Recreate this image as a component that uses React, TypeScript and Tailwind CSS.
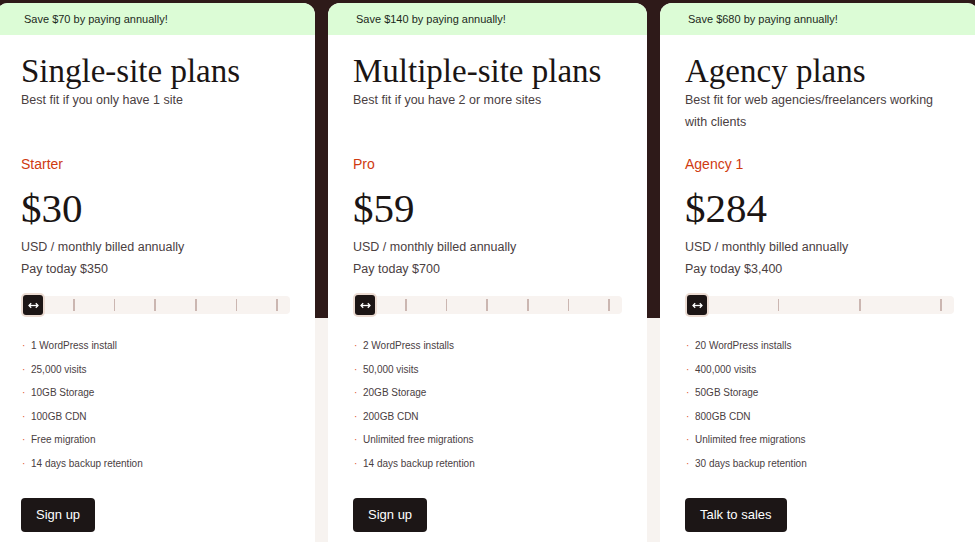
import React from "react";

type Plan = {
  save: string;
  title: string;
  subtitle: string;
  tier: string;
  price: string;
  payToday: string;
  steps: number;
  features: string[];
  cta: string;
};

const plans: Plan[] = [
  {
    save: "Save $70 by paying annually!",
    title: "Single-site plans",
    subtitle: "Best fit if you only have 1 site",
    tier: "Starter",
    price: "$30",
    payToday: "Pay today $350",
    steps: 6,
    features: [
      "1 WordPress install",
      "25,000 visits",
      "10GB Storage",
      "100GB CDN",
      "Free migration",
      "14 days backup retention",
    ],
    cta: "Sign up",
  },
  {
    save: "Save $140 by paying annually!",
    title: "Multiple-site plans",
    subtitle: "Best fit if you have 2 or more sites",
    tier: "Pro",
    price: "$59",
    payToday: "Pay today $700",
    steps: 6,
    features: [
      "2 WordPress installs",
      "50,000 visits",
      "20GB Storage",
      "200GB CDN",
      "Unlimited free migrations",
      "14 days backup retention",
    ],
    cta: "Sign up",
  },
  {
    save: "Save $680 by paying annually!",
    title: "Agency plans",
    subtitle: "Best fit for web agencies/freelancers working with clients",
    tier: "Agency 1",
    price: "$284",
    payToday: "Pay today $3,400",
    steps: 3,
    features: [
      "20 WordPress installs",
      "400,000 visits",
      "50GB Storage",
      "800GB CDN",
      "Unlimited free migrations",
      "30 days backup retention",
    ],
    cta: "Talk to sales",
  },
];

function Slider({ steps }: { steps: number }) {
  return (
    <div className="relative h-[24px]">
      <div className="absolute inset-x-0 top-[3px] h-[18px] rounded-[4px] bg-[#f8f3f0]">
        <div className="flex h-full items-center justify-between px-[12px]">
          <span className="w-px" />
          {Array.from({ length: steps }).map((_, i) => (
            <span key={i} className="h-[12px] w-[1.5px] bg-[#cbb6b1]" />
          ))}
        </div>
      </div>
      {/* handle */}
      <div className="absolute left-0 top-0 flex h-[24px] w-[24px] items-center justify-center rounded-[5px] bg-[#ecdcd3]">
        <div className="flex h-[20px] w-[20px] items-center justify-center rounded-[3px] bg-[#1c1515]">
          <svg width="11" height="7" viewBox="0 0 11 7" fill="none">
            <path d="M1 3.5h9" stroke="#fff" strokeWidth="1.3" />
            <path d="M3.2 1.2L1 3.5l2.2 2.3M7.8 1.2L10 3.5 7.8 5.8" stroke="#fff" strokeWidth="1.3" />
          </svg>
        </div>
      </div>
    </div>
  );
}

function PlanCard({ plan }: { plan: Plan }) {
  return (
    <div className="w-[319px] shrink-0 overflow-hidden rounded-t-[12px] bg-white">
      <div className="flex h-[32px] items-center bg-[#dcfcd6] pl-[28px] text-[11px] text-[#1d2a1c]">
        {plan.save}
      </div>
      <div className="px-[25px]">
        <h2 className="mt-[18px] font-['Liberation_Serif',serif] text-[33px] leading-[36px] font-normal text-[#1b1514]">
          {plan.title}
        </h2>
        <p className="h-[44px] text-[12.5px] leading-[22px] text-[#4a403f]">{plan.subtitle}</p>
        <div className="mt-[21px] text-[14px] leading-[20px] text-[#cf3a10]">{plan.tier}</div>
        <div className="mt-[10px] font-['Liberation_Serif',serif] text-[41px] leading-[48px] text-[#1b1514]">
          {plan.price}
        </div>
        <div className="mt-[4px] text-[12.5px] leading-[22px] text-[#4a403f]">
          <p>USD / monthly billed annually</p>
          <p>{plan.payToday}</p>
        </div>
        <div className="mt-[13px]">
          <Slider steps={plan.steps} />
        </div>
        <ul className="mt-[17px] text-[10px] leading-[23.5px] text-[#4a403f]">
          {plan.features.map((f) => (
            <li key={f} className="flex">
              <span className="w-[10px] pl-px text-[#e0582c]">·</span>
              <span>{f}</span>
            </li>
          ))}
        </ul>
        <button className="mt-[23px] h-[34px] rounded-[4px] bg-[#1c1616] px-[15px] text-[13px] text-white">
          {plan.cta}
        </button>
      </div>
    </div>
  );
}

export default function App() {
  return (
    <div className="h-[542px] w-[975px] overflow-hidden bg-[linear-gradient(to_bottom,#2e1a19_318px,#f7f3f0_318px)] font-['Liberation_Sans',Arial,sans-serif]">
      <div className="ml-[-4px] flex h-full gap-[13px] pt-[3px]">
        {plans.map((p) => (
          <PlanCard key={p.title} plan={p} />
        ))}
      </div>
    </div>
  );
}
